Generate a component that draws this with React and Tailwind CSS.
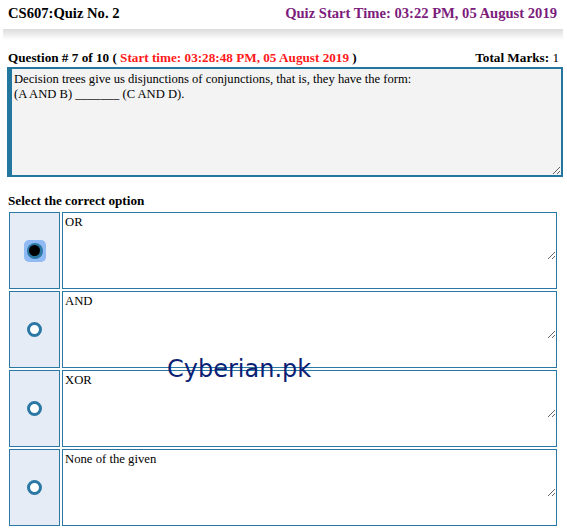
import React from "react";

const options = [
  { id: 1, text: "OR", checked: true },
  { id: 2, text: "AND", checked: false },
  { id: 3, text: "XOR", checked: false },
  { id: 4, text: "None of the given", checked: false },
];

const Radio = ({ checked }) =>
  checked ? (
    <div className="w-[22px] h-[22px] rounded-[5px] bg-[#8fbaf3] flex items-center justify-center">
      <div className="w-[16px] h-[16px] rounded-full bg-[#2b78a5] flex items-center justify-center">
        <div className="w-[11px] h-[11px] rounded-full bg-black" />
      </div>
    </div>
  ) : (
    <div className="w-[15px] h-[15px] rounded-full border-[3px] border-[#2b78a5] bg-white" />
  );

const App = () => {
  return (
    <div className="relative w-[567px] h-[530px] bg-white font-['Liberation_Serif',serif] text-black overflow-hidden">
      {/* Header */}
      <div className="flex justify-between items-center px-2 pt-[3px] h-[24px] text-[14.6px] font-bold">
        <span>CS607:Quiz No. 2</span>
        <span className="text-[#7c1c7c] pr-[2px]">
          Quiz Start Time: 03:22 PM, 05 August 2019
        </span>
      </div>
      <div className="mx-[3px] mr-[4px] mt-[5px] h-[11px] bg-gradient-to-b from-[#dcdcdc] to-white" />

      {/* Question */}
      <div className="flex justify-between items-end px-2 pr-[8px] mt-[10px] text-[13.2px] leading-[16px]">
        <span className="font-bold">
          Question # 7 of 10 ({" "}
          <span className="text-[#ff1a1a]">
            Start time: 03:28:48 PM, 05 August 2019
          </span>{" "}
          )
        </span>
        <span>
          <span className="font-bold">Total Marks:</span> 1
        </span>
      </div>
      <div className="px-[7px] pr-[4px] mt-[1px]">
        <textarea
          readOnly
          className="block w-full h-[110px] bg-[#f3f3f3] border-2 border-l-[5px] border-[#23779f] px-[2px] pt-[3px] text-[12.6px] leading-[15px] outline-none"
          defaultValue={
            "Decision trees give us disjunctions of conjunctions, that is, they have the form:\n(A AND B) _______ (C AND D)."
          }
        />
      </div>

      {/* Options */}
      <div className="px-2 mt-[16px] text-[13.2px] font-bold leading-[16px]">
        Select the correct option
      </div>
      <div className="flex flex-col gap-[2px] pl-[9px] pr-[10px] mt-[3px]">
        {options.map((opt) => (
          <div key={opt.id} className="flex gap-[2px] h-[77px]">
            <div className="w-[51px] shrink-0 bg-[#e5ecf6] border-[1.5px] border-[#2b78a5] flex items-center justify-center">
              <Radio checked={opt.checked} />
            </div>
            <div className="flex-1 bg-white border-[1.5px] border-[#2b78a5]">
              <textarea
                readOnly
                className="block w-full h-[47px] bg-white px-[2px] pt-[2px] text-[12.7px] leading-[14px] outline-none"
                defaultValue={opt.text}
              />
            </div>
          </div>
        ))}
      </div>

      {/* Watermark */}
      <div className="absolute left-[167px] top-[353px] font-['DejaVu_Sans',sans-serif] text-[24px] leading-[32px] text-[#0b1f73] pointer-events-none">
        Cyberian.pk
      </div>
    </div>
  );
};

export default App;
